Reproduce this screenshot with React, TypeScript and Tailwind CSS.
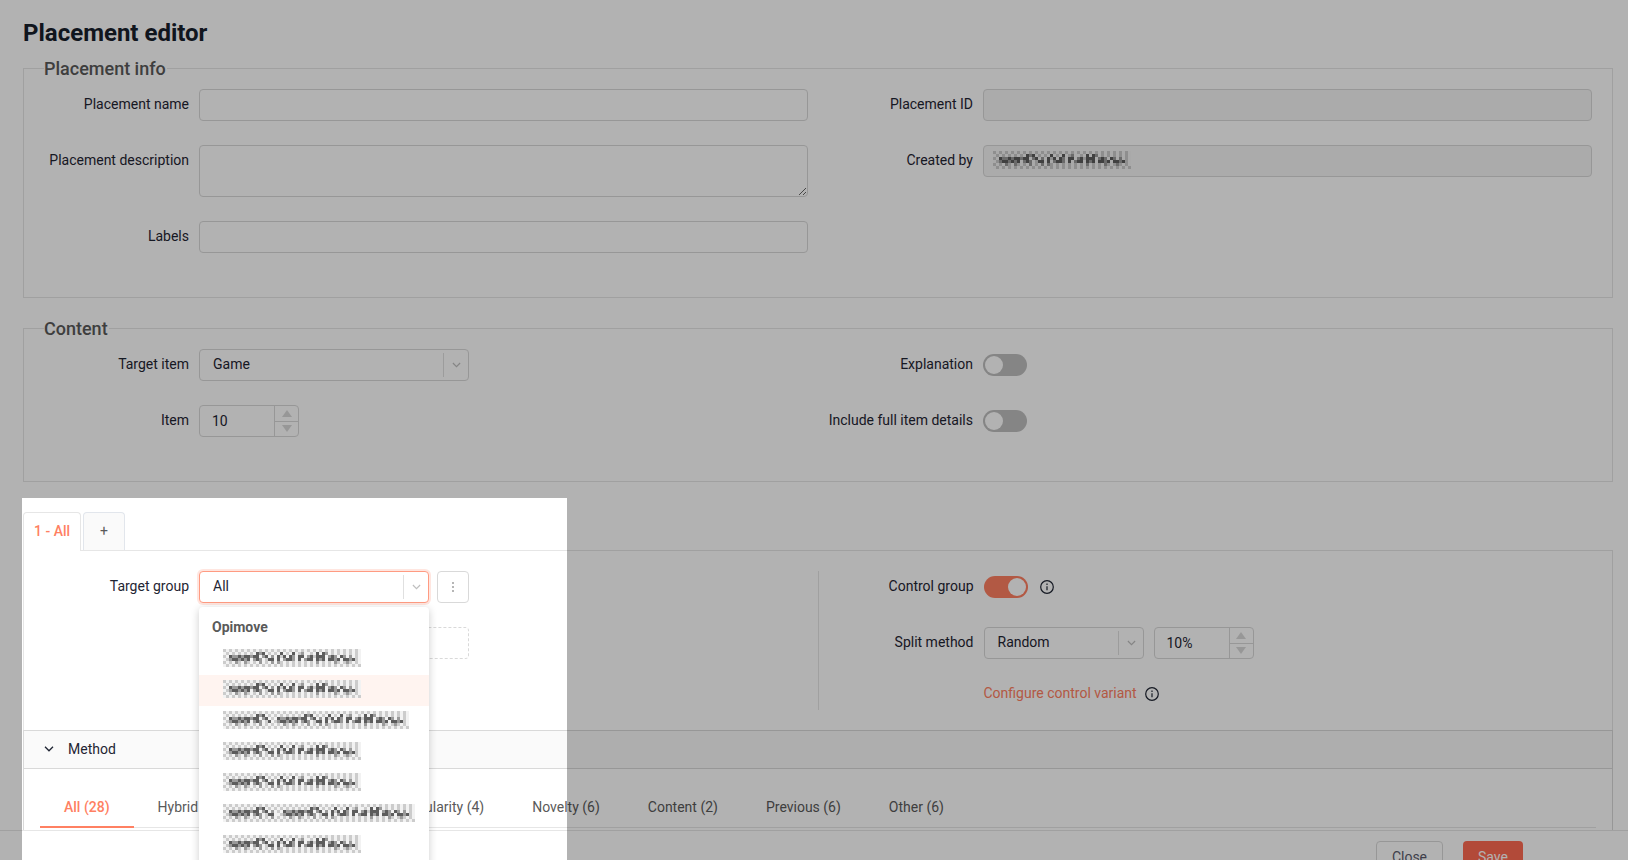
import { useState } from 'react'
import type { ReactNode } from 'react'
import clsx from 'clsx'

const SHADES: Record<string, string> = {
  '.': '#f2f2f2',
  '-': '#cccccc',
  '+': '#9a9a9a',
  '#': '#5c5c5c',
}

// Each character is one 3px cell of the redaction mosaic
const MOSAIC = [
  '-.-.-.-.-.-.-.-.-.-.-.-.-.-.-.-.-.-.-.-.-.-.-.',
  '.-.-.-.-.-.#+#.-.-.#.-.#.-+..-.#.#+.-.-.-.-.-.',
  '-.#++#+##+##.+#.+.#-#.#+.##.+#-###.+#+.#+.+.-.',
  '.-+##+#+#.+#+.-##.#.+##+.#.+##.#+#.##+#.##+#-.',
  '-.-.+-.+-.-.+.-.+.+-.-.-.-.-.-.+.-.-.+-.-+-.-.',
  '.-.-.-.-.-.-.-.-.-.-.-.-.-.-.-.-.-.-.-.-.-.-.-',
]

const CELL = 3

function Redacted({ prefix = 0 }: { prefix?: number }) {
  const rows = MOSAIC.map((row) => row.slice(0, prefix) + row)
  const width = rows[0].length * CELL
  const height = rows.length * CELL

  return (
    <svg role="img" aria-label="Redacted" width={width} height={height} viewBox={`0 0 ${width} ${height}`}>
      {rows.map((row, y) =>
        row.split('').map((c, x) => (
          <rect key={`${x}-${y}`} x={x * CELL} y={y * CELL} width={CELL} height={CELL} fill={SHADES[c]} />
        ))
      )}
    </svg>
  )
}

function InfoIcon() {
  return (
    <svg className="h-[14px] w-[14px] text-[#1f2533]" viewBox="0 0 14 14" fill="none" stroke="currentColor">
      <circle cx="7" cy="7" r="6.3" strokeWidth="1.2" />
      <path d="M7 6.2v4" strokeWidth="1.2" />
      <path d="M7 3.6v1.3" strokeWidth="1.2" />
    </svg>
  )
}

function Chevron({ className }: { className?: string }) {
  return (
    <svg className={className} viewBox="0 0 10 6" fill="none" stroke="currentColor" strokeWidth="1.3">
      <path d="M1 .8l4 4 4-4" />
    </svg>
  )
}

const inputClass =
  'block w-full rounded border border-[#d9d9d9] bg-white px-3 text-sm outline-none disabled:bg-[#f5f5f5]'

interface FieldProps {
  id?: string
  label?: string
  children: ReactNode
}

function Field({ id, label, children }: FieldProps) {
  return (
    <div className="mb-6 flex items-start">
      <label htmlFor={id} className="w-[155px] shrink-0 pr-[10px] text-right text-sm leading-[31px]">
        {label}
      </label>
      <div className="flex min-w-0 flex-1 items-center">{children}</div>
    </div>
  )
}

interface SelectProps {
  id: string
  options: string[]
  className: string
  focused?: boolean
}

function Select({ id, options, className, focused }: SelectProps) {
  return (
    <div className={clsx('relative', className)}>
      <select
        id={id}
        className={clsx(
          'block h-8 w-full appearance-none rounded border bg-white pr-8 pb-[2px] pl-[13px] text-sm outline-none',
          focused ? 'border-[#ff9b82] shadow-[0_0_0_2px_rgba(255,128,98,0.2)]' : 'border-[#d9d9d9]'
        )}
      >
        {options.map((o) => (
          <option key={o}>{o}</option>
        ))}
      </select>
      <span className="pointer-events-none absolute top-1 right-0 flex h-6 w-[26px] items-center justify-center border-l border-[#e0e0e0] text-[#bfbfbf]">
        <Chevron className="h-[6px] w-[9px]" />
      </span>
    </div>
  )
}

function NumberInput({ id, label, initial, suffix = '' }: { id: string; label: string; initial: number; suffix?: string }) {
  const [value, setValue] = useState(initial)

  return (
    <div className="flex h-8 w-[100px] overflow-hidden rounded border border-[#d9d9d9] bg-white">
      <input
        id={id}
        aria-label={label}
        className="min-w-0 flex-1 bg-transparent pl-3 text-sm outline-none"
        value={`${value}${suffix}`}
        onChange={(e) => setValue(parseInt(e.target.value) || 0)}
      />
      <div className="flex w-6 flex-col border-l border-[#d9d9d9] text-[#d9d9d9]">
        <button
          type="button"
          aria-label="Increase"
          onClick={() => setValue(value + 1)}
          className="flex flex-1 items-center justify-center border-b border-[#d9d9d9]"
        >
          <svg width="10" height="7" viewBox="0 0 10 7" fill="currentColor">
            <path d="M5 0l5 7H0z" />
          </svg>
        </button>
        <button
          type="button"
          aria-label="Decrease"
          onClick={() => setValue(value - 1)}
          className="flex flex-1 items-center justify-center"
        >
          <svg width="10" height="7" viewBox="0 0 10 7" fill="currentColor">
            <path d="M5 7L0 0h10z" />
          </svg>
        </button>
      </div>
    </div>
  )
}

function Toggle({ id, defaultChecked }: { id: string; defaultChecked?: boolean }) {
  return (
    <div className="flex h-8 items-center">
      <input
        id={id}
        type="checkbox"
        role="switch"
        defaultChecked={defaultChecked}
        className="h-[22px] w-11 appearance-none rounded-full bg-[#bfbfbf] p-[2px] before:block before:h-[18px] before:w-[18px] before:rounded-full before:bg-white checked:bg-[#ff8062] checked:before:ml-[22px]"
      />
    </div>
  )
}

function Section({ title, children }: { title: string; children: ReactNode }) {
  return (
    <fieldset className="grid grid-cols-2 gap-x-5 border border-[#e6e6e6] px-5 pt-[7px] pb-5">
      <legend className="pr-px text-lg leading-[27px] font-medium text-[#5a5a5a]">{title}</legend>
      {children}
    </fieldset>
  )
}

const methods = [
  'All (28)',
  'Hybrid (2)',
  'Frequency (2)',
  'Popularity (4)',
  'Novelty (6)',
  'Content (2)',
  'Previous (6)',
  'Other (6)',
]

// Extra leading cells per redacted group name
const groups = [0, 0, 16, 0, 0, 18, 0, 0]

export default function App() {
  const [method, setMethod] = useState(methods[0])

  return (
    <div className="relative h-screen overflow-hidden bg-white font-['Roboto',sans-serif] text-sm text-[#1f2533]">
      <main className="pr-[15px] pl-[23px]">
        <h1 className="pt-[17px] pb-[6px] text-2xl leading-8 font-bold text-[#17202c]">Placement editor</h1>

        <Section title="Placement info">
          <div>
            <Field id="name" label="Placement name">
              <input id="name" className={clsx(inputClass, 'h-8')} />
            </Field>
            <Field id="description" label="Placement description">
              <textarea id="description" className={clsx(inputClass, 'h-[52px]')} />
            </Field>
            <Field id="labels" label="Labels">
              <input id="labels" className={clsx(inputClass, 'h-8')} />
            </Field>
          </div>
          <div>
            <Field id="placement-id" label="Placement ID">
              <input id="placement-id" disabled className={clsx(inputClass, 'h-8')} />
            </Field>
            <Field id="created-by" label="Created by">
              <div className="relative w-full">
                <input id="created-by" disabled className={clsx(inputClass, 'h-8')} />
                <span className="absolute top-[6px] left-[10px]">
                  <Redacted />
                </span>
              </div>
            </Field>
          </div>
        </Section>

        <div className="mt-[17px]">
          <Section title="Content">
            <div>
              <Field id="target-item" label="Target item">
                <Select id="target-item" options={['Game']} className="w-[270px]" />
              </Field>
              <Field id="item" label="Item">
                <NumberInput id="item" label="Item" initial={10} />
              </Field>
            </div>
            <div>
              <Field id="explanation" label="Explanation">
                <Toggle id="explanation" />
              </Field>
              <Field id="details" label="Include full item details">
                <Toggle id="details" />
              </Field>
            </div>
          </Section>
        </div>

        {/* Variant tabs */}
        <div className="mt-[30px] flex gap-[2px]">
          <button
            type="button"
            className="relative -mb-px h-[39px] w-[58px] rounded-t border border-b-0 border-[#e6e6e6] bg-white pb-[2px] font-medium text-[#ff8062]"
          >
            1 - All
          </button>
          <button
            type="button"
            aria-label="Add variant"
            className="h-[38px] w-[42px] rounded-t border border-b-0 border-[#e2e6ec] bg-[#fafafa] pb-px text-[#5a5a5a]"
          >
            +
          </button>
        </div>

        <section className="flex border border-b-0 border-[#e6e6e6] p-5">
          <div className="flex-1">
            <Field id="target-group" label="Target group">
              <div className="relative">
                <Select id="target-group" options={['All']} className="w-[230px]" focused />
                <div className="absolute top-9 left-0 z-20 w-full rounded bg-white pt-1 shadow-[0_2px_8px_rgba(0,0,0,0.2)]">
                  <p className="px-[13px] pb-px leading-8 font-bold text-[#5a5a5a]">Opimove</p>
                  <ul>
                    {groups.map((prefix, i) => (
                      <li
                        key={i}
                        className={clsx('flex h-[31px] items-center pb-1 pl-6', i === 1 && 'bg-[#fff4f0]')}
                      >
                        <Redacted prefix={prefix} />
                      </li>
                    ))}
                  </ul>
                </div>
              </div>
              <button
                type="button"
                aria-label="More actions"
                className="ml-2 flex h-8 w-8 items-center justify-center rounded border border-[#d9d9d9] bg-white text-[#5a5a5a]"
              >
                <svg width="4" height="12" viewBox="0 0 4 12" fill="currentColor">
                  <circle cx="2" cy="2" r=".8" />
                  <circle cx="2" cy="6" r=".8" />
                  <circle cx="2" cy="10" r=".8" />
                </svg>
              </button>
            </Field>
            <div className="ml-[155px] h-8 w-[270px] rounded border border-dashed border-[#d9d9d9]" />
          </div>
          <div className="mx-[10px] w-px bg-[#e6e6e6]" />
          <div className="flex-1">
            <Field id="control-group" label="Control group">
              <Toggle id="control-group" defaultChecked />
              <span className="ml-3">
                <InfoIcon />
              </span>
            </Field>
            <Field id="split-method" label="Split method">
              <Select id="split-method" options={['Random']} className="mr-[10px] w-[160px]" />
              <NumberInput id="split" label="Split percentage" initial={10} suffix="%" />
            </Field>
            <div className="ml-[155px] flex items-center gap-2 pb-[6px] leading-[21px]">
              <a href="#" className="text-[#ff8062]">
                Configure control variant
              </a>
              <InfoIcon />
            </div>
          </div>
        </section>

        {/* Method panel */}
        <section className="border border-b-0 border-[#d9d9d9]">
          <button
            type="button"
            className="flex h-[38px] w-full items-center border-b border-[#d9d9d9] bg-[#fafafa] pb-px pl-5"
          >
            <Chevron className="h-[6px] w-[10px]" />
            <span className="pl-[14px]">Method</span>
          </button>
          <div className="px-4 pt-4 pb-[2px]">
            <div className="flex h-[43px] border-b border-[#e6e6e6]">
              {methods.map((m) => (
                <button
                  key={m}
                  type="button"
                  onClick={() => setMethod(m)}
                  className={clsx(
                    '-mb-px border-b-2 px-6 pt-[2px]',
                    m === method ? 'border-[#ff8062] font-medium text-[#ff8062]' : 'border-transparent text-[#5a5a5a]'
                  )}
                >
                  {m}
                </button>
              ))}
            </div>
          </div>
        </section>
      </main>

      <footer className="relative z-10 flex justify-end gap-5 border-t border-[#e6e6e6] bg-white py-[10px] pr-[105px]">
        <button type="button" className="h-8 rounded border border-[#d9d9d9] bg-white px-[15px] text-[#5a5a6b]">
          Close
        </button>
        <button type="button" className="h-8 rounded bg-[#ff6b52] px-[15px] text-white">
          Save
        </button>
      </footer>

      {/* Spotlight, dims everything outside the target group area */}
      <div className="pointer-events-none absolute top-[498px] bottom-0 left-[22px] z-30 w-[545px] shadow-[0_0_0_9999px_rgba(0,0,0,0.3)]" />
    </div>
  )
}
